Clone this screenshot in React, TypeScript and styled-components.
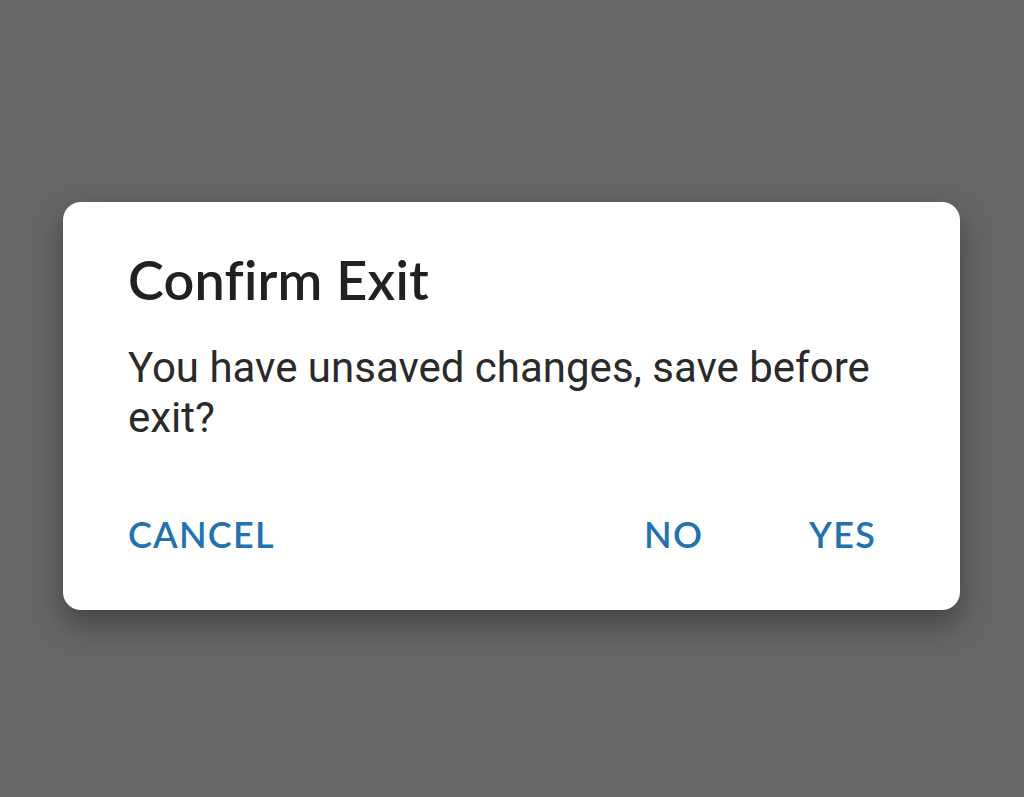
import React from "react";
import styled, { createGlobalStyle } from "styled-components";

const GlobalStyle = createGlobalStyle`
  html, body {
    margin: 0;
    padding: 0;
    background: #666666;
  }
`;

const Screen = styled.div`
  width: 1024px;
  height: 797px;
  box-sizing: border-box;
  padding-top: 202px;
  padding-left: 63px;
  background: #666666;
`;

const Dialog = styled.div`
  width: 897px;
  height: 408px;
  box-sizing: border-box;
  background: #ffffff;
  border-radius: 18px;
  box-shadow: 0 14px 30px rgba(0, 0, 0, 0.35);
  padding: 46px 84px 0 65px;
  display: flex;
  flex-direction: column;
`;

const Title = styled.h2`
  margin: 0;
  font-family: Lato, "Open Sans", sans-serif;
  font-weight: 600;
  font-size: 54px;
  letter-spacing: 0.2px;
  line-height: 64px;
  color: #212121;
`;

const Message = styled.p`
  margin: 31px 0 0;
  font-family: Roboto, "Noto Sans", sans-serif;
  font-size: 42px;
  line-height: 50px;
  color: #2a2a2a;
`;

const Actions = styled.div`
  margin-top: 71px;
  display: flex;
  align-items: center;
`;

const Spacer = styled.div`
  flex: 1;
`;

const ActionButton = styled.button<{ $gap?: number }>`
  border: none;
  background: none;
  padding: 0;
  margin-left: ${({ $gap }) => ($gap ? `${$gap}px` : "0")};
  font-family: Lato, "Open Sans", sans-serif;
  font-weight: 600;
  font-size: 36px;
  letter-spacing: 1.2px;
  line-height: 40px;
  color: #2272b0;
  cursor: pointer;
`;

export default function App() {
  return (
    <>
      <GlobalStyle />
      <Screen>
        <Dialog>
          <Title>Confirm Exit</Title>
          <Message>You have unsaved changes, save before exit?</Message>
          <Actions>
            <ActionButton>CANCEL</ActionButton>
            <Spacer />
            <ActionButton>NO</ActionButton>
            <ActionButton $gap={106}>YES</ActionButton>
          </Actions>
        </Dialog>
      </Screen>
    </>
  );
}
